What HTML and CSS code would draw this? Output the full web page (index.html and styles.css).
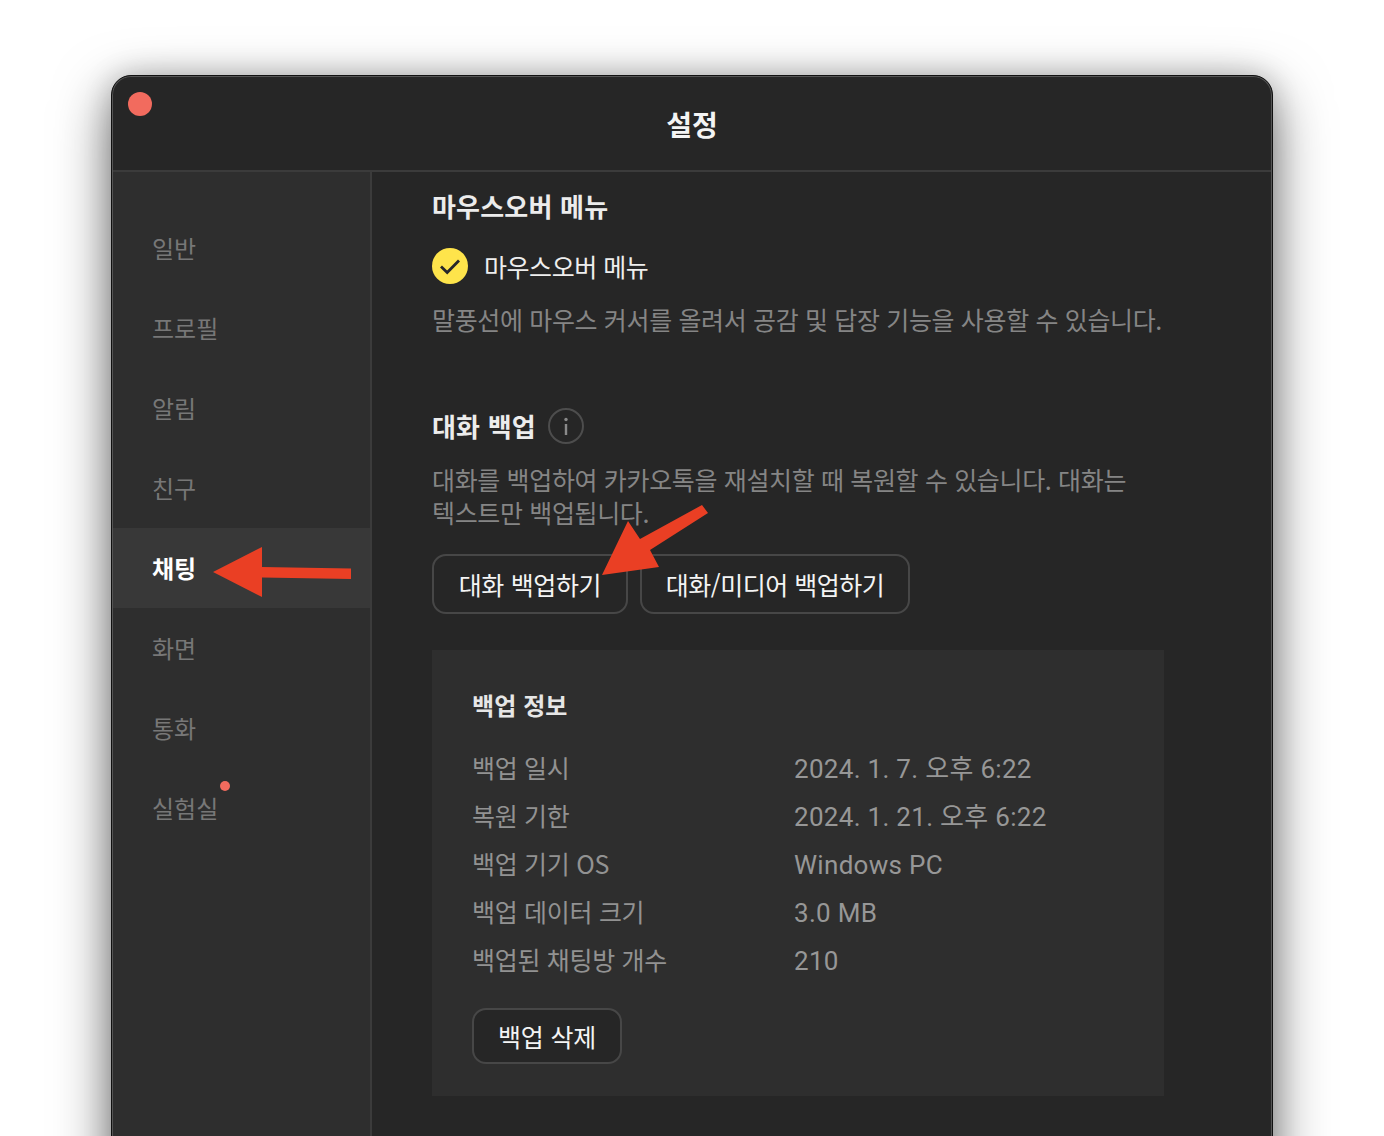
FILE: index.html
```html
<!DOCTYPE html>
<html lang="ko">
<head>
<meta charset="utf-8">
<title>설정</title>
<link rel="stylesheet" href="styles.css">
</head>
<body>
<div class="window">
  <header class="titlebar">
    <span class="close"></span>
    <h1 class="title">설정</h1>
  </header>
  <div class="body">
    <nav class="sidebar">
      <div class="nav-item">일반</div>
      <div class="nav-item">프로필</div>
      <div class="nav-item">알림</div>
      <div class="nav-item">친구</div>
      <div class="nav-item active">채팅</div>
      <div class="nav-item">화면</div>
      <div class="nav-item">통화</div>
      <div class="nav-item"><span class="labeled">실험실<span class="dot"></span></span></div>
    </nav>
    <main class="content">
      <h2 class="section-title first">마우스오버 메뉴</h2>
      <div class="check-row">
        <svg class="check" viewBox="0 0 36 36" width="36" height="36"><circle cx="18" cy="18" r="18" fill="#fee44b"/><path d="M9 18.5l6.2 6L27 12.5" fill="none" stroke="#26262a" stroke-width="2.8"/></svg>
        <span class="check-label">마우스오버 메뉴</span>
      </div>
      <p class="desc">말풍선에 마우스 커서를 올려서 공감 및 답장 기능을 사용할 수 있습니다.</p>
      <div class="title-row">
        <h2 class="section-title">대화 백업</h2>
        <svg class="info" viewBox="0 0 36 36" width="36" height="36"><circle cx="18" cy="18" r="17" fill="none" stroke="#4d4d4d" stroke-width="2"/><circle cx="18" cy="11.5" r="1.7" fill="#8a8a8a"/><rect x="16.800" y="16" width="2.400" height="11" fill="#8a8a8a"/></svg>
      </div>
      <p class="desc wrap">대화를 백업하여 카카오톡을 재설치할 때 복원할 수 있습니다. 대화는 텍스트만 백업됩니다.</p>
      <div class="buttons">
        <button class="btn wide-a">대화 백업하기</button>
        <button class="btn wide-b">대화/미디어 백업하기</button>
      </div>
      <section class="panel">
        <h3 class="panel-title">백업 정보</h3>
        <dl class="info-grid">
          <dt>백업 일시</dt><dd>2024. 1. 7. 오후 6:22</dd>
          <dt>복원 기한</dt><dd>2024. 1. 21. 오후 6:22</dd>
          <dt>백업 기기 OS</dt><dd>Windows PC</dd>
          <dt>백업 데이터 크기</dt><dd>3.0 MB</dd>
          <dt>백업된 채팅방 개수</dt><dd>210</dd>
        </dl>
        <button class="btn del">백업 삭제</button>
      </section>
    </main>
  </div>
  <svg class="annot arrow-left" viewBox="0 0 140 52" width="140" height="52"><path d="M0 25L49 0V20L138 21.500V32L49 30.500V50Z" fill="#ea3f24"/></svg>
  <svg class="annot arrow-down" viewBox="0 0 106 72" width="106" height="72"><path d="M100 0L106 8L48 45L57 62L0 70L26 16L38 34Z" fill="#ea3f24"/></svg>
</div>
</body>
</html>
```
FILE: styles.css
```css
* { box-sizing: border-box; }
html, body { margin: 0; height: 1136px; overflow: hidden; background: #fff; }
body { padding: 75px 111px 0; font-family: "Noto Sans CJK KR", "Noto Sans", sans-serif; }
.window {
  position: relative;
  width: 1162px;
  height: 1200px;
  background: #262626;
  border: 1px solid #111;
  border-radius: 20px 20px 0 0;
  box-shadow: inset 0 0 0 1px #555, 0 18px 55px rgba(0,0,0,.55), 0 0 28px rgba(0,0,0,.18);
  display: flex;
  flex-direction: column;
}
.titlebar { height: 96px; flex: none; position: relative; display: flex; align-items: center; justify-content: center; border-bottom: 2px solid #3b3b3b; margin: 0 1px; }
.close { position: absolute; left: 15px; top: 16px; width: 24px; height: 24px; border-radius: 50%; background: #f26b5e; }
.title { margin: 0; font-size: 28px; font-weight: 700; color: #f4f4f4; line-height: 40px; position: relative; top: 1px; }
.body { flex: 1; display: flex; margin: 0 1px; min-height: 0; }
.sidebar { width: 259px; flex: none; background: #2e2e2e; border-right: 2px solid #3b3b3b; padding-top: 36px; }
.nav-item { height: 80px; display: flex; align-items: center; padding: 0 0 2px 39px; font-size: 24px; color: #777; }
.nav-item.active { background: #383838; color: #fff; font-weight: 700; }
.labeled { position: relative; }
.dot { position: absolute; right: -12px; top: -9px; width: 10px; height: 10px; border-radius: 50%; background: #f26b5e; }
.content { flex: 1; padding: 15px 0 0 60px; min-width: 0; }
.section-title { margin: 0; font-size: 26px; font-weight: 700; color: #ececec; line-height: 38px; letter-spacing: .2px; }
.check-row { display: flex; align-items: center; gap: 16px; margin-top: 23px; height: 36px; }
.check-label { font-size: 25px; color: #eee; letter-spacing: -.45px; }
.desc { margin: 19px 0 0; font-size: 25px; line-height: 33px; color: #858585; width: 732px; letter-spacing: -.35px; }
.title-row { display: flex; align-items: center; gap: 12px; margin-top: 71px; height: 38px; }
.desc.wrap { margin-top: 18px; width: 710px; }
.buttons { display: flex; gap: 12px; margin-top: 25px; }
.btn { font: inherit; font-size: 25px; color: #f4f4f4; background: #262626; border: 2px solid #474747; border-radius: 14px; padding: 0; letter-spacing: -.35px; }
.wide-a { width: 196px; height: 60px; }
.wide-b { width: 270px; height: 60px; letter-spacing: -.5px; }
.panel { width: 732px; height: 446px; margin-top: 36px; background: #2e2e2e; padding: 36px 40px 0; }
.panel-title { margin: 0; font-size: 24px; font-weight: 700; color: #e6e6e6; line-height: 38px; letter-spacing: .1px; }
.info-grid { display: grid; grid-template-columns: 322px 1fr; grid-auto-rows: 48px; margin: 19px 0 0; font-size: 26px; color: #979797; align-items: center; font-family: Roboto, "Noto Sans CJK KR", sans-serif; letter-spacing: .3px; }
.info-grid dt { font-family: "Noto Sans CJK KR", sans-serif; letter-spacing: -.3px; font-size: 25px; color: #929292; }
.info-grid dd { margin: 0; line-height: 48px; align-self: start; padding-top: 2px; }
.del { display: block; width: 150px; height: 56px; margin-top: 25px; background: #262626; letter-spacing: -.2px; }
.annot { position: absolute; }
.arrow-left { left: 101px; top: 471px; }
.arrow-down { left: 490px; top: 429px; }
```
